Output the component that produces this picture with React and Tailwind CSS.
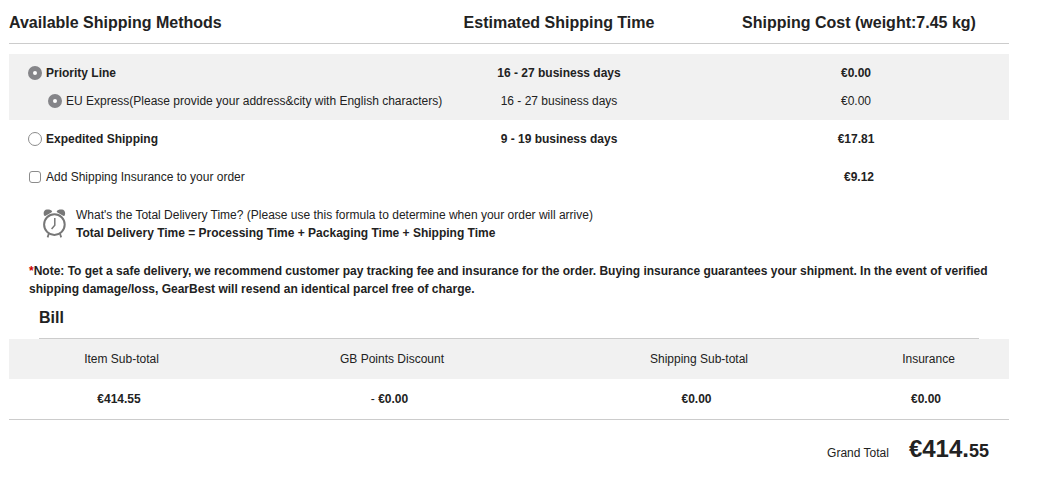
import { useState } from 'react';

const radioClass =
  'appearance-none shrink-0 size-3.5 rounded-full border border-[#8c8c8c] bg-white checked:border-5 checked:border-[#858589]';

const billColumns = [
  { label: 'Item Sub-total', value: '€414.55', width: 'w-[22.5%]' },
  { label: 'GB Points Discount', sign: '- ', value: '€0.00', width: 'w-[31.6%]' },
  { label: 'Shipping Sub-total', value: '€0.00', width: 'w-[29.8%]' },
  { label: 'Insurance', value: '€0.00', width: 'w-[16.1%]' },
];

const AlarmClock = () => (
  <svg viewBox="0 0 24 30" className="w-6 h-[30px] shrink-0" fill="none" stroke="#777" aria-hidden="true">
    <path d="M2 6.4C1.2 4 1.8 1.6 3.6.8 5.800 0 9 .4 10.200 2.200L9.400 3.600 3.200 7Z" fill="#777" stroke="none" />
    <path d="M22.800 6.400C23.600 4 23 1.600 21.200.8 19 0 15.800.4 14.600 2.200l.8 1.400L21.600 7Z" fill="#777" stroke="none" />
    <circle cx="12.4" cy="15.6" r="10.300" strokeWidth="2" />
    <path d="M12.800 9v7.300L9.600 20" strokeWidth="1.500" />
    <path d="M6.700 25 5.600 28.400M18.100 25l1.100 3.400" strokeWidth="1.800" />
  </svg>
);

const ShippingMethods = () => {
  const [method, setMethod] = useState('priority');
  const [insurance, setInsurance] = useState(false);

  return (
    <table className="w-full table-fixed border-collapse text-center">
      <thead>
        <tr className="h-[43px] border-b border-[#ccc] text-base">
          <th className="w-2/5 pt-[3px] text-left">Available Shipping Methods</th>
          <th className="w-[30%] pt-[3px]">Estimated Shipping Time</th>
          <th className="w-[30%] pt-[3px]">Shipping Cost (weight:7.45 kg)</th>
        </tr>
      </thead>
      <tbody>
        <tr className="h-[11px]" aria-hidden="true">
          <td colSpan={3} />
        </tr>
        <tr className="h-[33px] bg-[#f1f1f1] font-bold">
          <td className="pt-[5px] pl-[19px]">
            <label className="flex items-center gap-1">
              <input
                type="radio"
                name="method"
                className={radioClass}
                checked={method === 'priority'}
                onChange={() => setMethod('priority')}
              />
              Priority Line
            </label>
          </td>
          <td className="pt-[5px]">16 - 27 business days</td>
          <td className="pt-[5px] pr-[6px]">€0.00</td>
        </tr>
        <tr className="h-[33px] bg-[#f1f1f1]">
          <td className="pb-[5px] pl-[39px]">
            <label className="flex items-center gap-1 whitespace-nowrap">
              <input type="radio" name="carrier" className={radioClass} defaultChecked />
              EU Express(Please provide your address&amp;city with English characters)
            </label>
          </td>
          <td className="pb-[5px]">16 - 27 business days</td>
          <td className="pb-[5px] pr-[6px]">€0.00</td>
        </tr>
        <tr className="h-[38px] font-bold">
          <td className="pl-[19px]">
            <label className="flex items-center gap-1">
              <input
                type="radio"
                name="method"
                className={radioClass}
                checked={method === 'expedited'}
                onChange={() => setMethod('expedited')}
              />
              Expedited Shipping
            </label>
          </td>
          <td>9 - 19 business days</td>
          <td className="pr-[6px]">€17.81</td>
        </tr>
        <tr className="h-[38px]">
          <td className="pl-[19px]">
            <label className="flex items-center gap-1">
              <input
                type="checkbox"
                className="appearance-none shrink-0 size-3 mx-px rounded-[3px] border border-[#8c8c8c] bg-white checked:bg-[#858589]"
                checked={insurance}
                onChange={(e) => setInsurance(e.target.checked)}
              />
              Add Shipping Insurance to your order
            </label>
          </td>
          <td />
          <td className="font-bold">€9.12</td>
        </tr>
      </tbody>
    </table>
  );
};

const Bill = () => (
  <section>
    <h2 className="mx-[30px] border-b border-[#ccc] text-base leading-10 font-bold">Bill</h2>
    <table className="w-full table-fixed border-collapse border-b border-[#ccc] text-center">
      <thead>
        <tr className="h-10 bg-[#f1f1f1]">
          {billColumns.map((col) => (
            <th key={col.label} className={`font-normal ${col.width}`}>
              {col.label}
            </th>
          ))}
        </tr>
      </thead>
      <tbody>
        <tr className="h-10">
          {billColumns.map((col) => (
            <td key={col.label} className="pr-[5px]">
              {col.sign}
              <strong>{col.value}</strong>
            </td>
          ))}
        </tr>
      </tbody>
    </table>
    <div className="flex items-baseline justify-end gap-5 pt-[11px] pr-5">
      <span>Grand Total</span>
      <strong className="text-2xl leading-9">
        €414.<span className="text-lg">55</span>
      </strong>
    </div>
  </section>
);

const App = () => (
  <main className="bg-white pl-[9px] pr-[35px] font-['Liberation_Sans',Arial,sans-serif] text-xs leading-[18px] text-[#222]">
    <ShippingMethods />

    <div className="mt-2.5 ml-[33px] flex items-center gap-2.5">
      <AlarmClock />
      <div>
        <p>What's the Total Delivery Time? (Please use this formula to determine when your order will arrive)</p>
        <p className="font-bold">Total Delivery Time = Processing Time + Packaging Time + Shipping Time</p>
      </div>
    </div>

    <p className="mt-5 px-5 font-bold">
      <span className="text-[#c00]">*</span>Note: To get a safe delivery, we recommend customer pay tracking fee and
      insurance for the order. Buying insurance guarantees your shipment. In the event of verified shipping
      damage/loss, GearBest will resend an identical parcel free of charge.
    </p>

    <Bill />
  </main>
);

export default App;
